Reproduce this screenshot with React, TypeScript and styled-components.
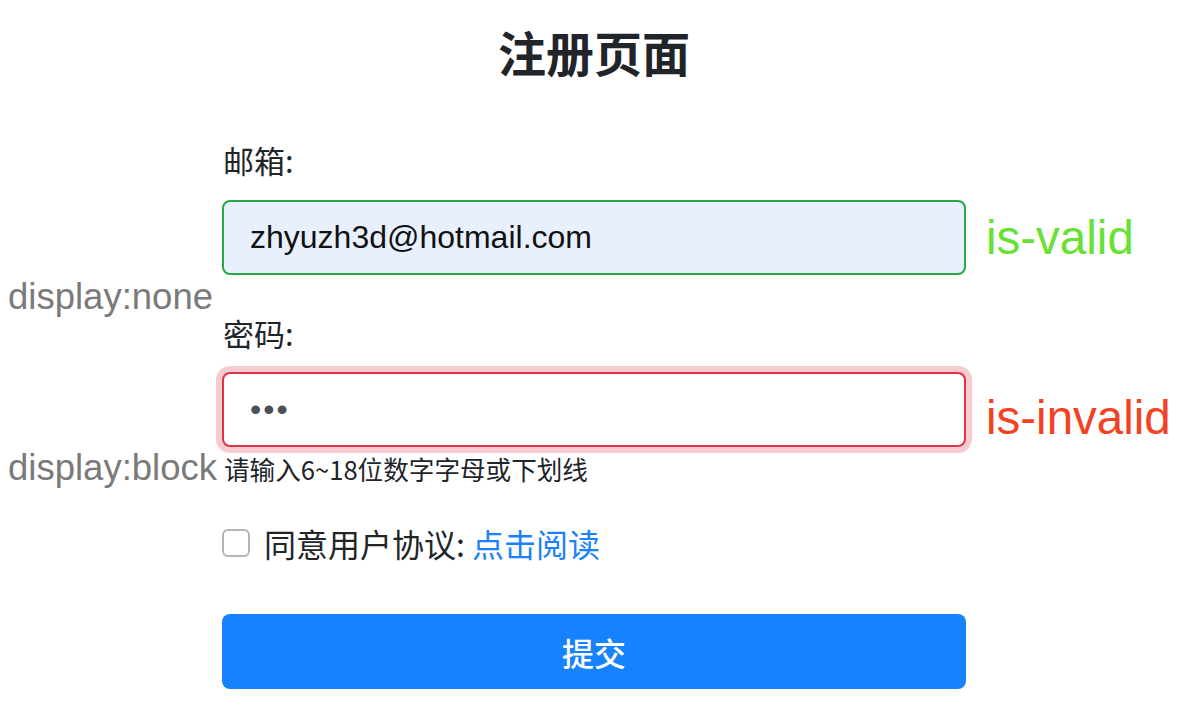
import React from "react";
import styled, { createGlobalStyle } from "styled-components";

const Global = createGlobalStyle`
  html, body { margin: 0; padding: 0; background: #fff; }
  body {
    font-family: "Liberation Sans", "Noto Sans CJK SC", sans-serif;
    color: #212529;
  }
  * { box-sizing: border-box; }
`;

const Page = styled.div`
  width: 1194px;
  height: 716px;
  overflow: hidden;
  display: flex;
  flex-direction: column;
`;

const Title = styled.h1`
  margin: 22px 0 0;
  font-size: 48px;
  line-height: 58px;
  font-weight: 700;
  text-align: center;
  padding-right: 6px;
  font-family: "Noto Sans CJK SC", sans-serif;
  color: #212529;
`;

const Form = styled.form`
  display: flex;
  flex-direction: column;
`;

const Row = styled.div<{ $mt?: number; $h?: number; $baseline?: boolean }>`
  display: grid;
  grid-template-columns: 222px 744px 1fr;
  align-items: ${(p) => (p.$baseline ? "baseline" : "center")};
  margin-top: ${(p) => p.$mt ?? 0}px;
  ${(p) => (p.$h ? `height: ${p.$h}px;` : "")}
`;

const Side = styled.div<{ $pr?: number }>`
  grid-column: 1;
  text-align: right;
  padding-right: ${(p) => p.$pr ?? 6}px;
  font-size: 36.5px;
  color: #7a7a7a;
  white-space: nowrap;
  font-family: "Liberation Sans", sans-serif;
`;

const SideNone = styled(Side)`
  align-self: stretch;
  display: flex;
  align-items: center;
  justify-content: flex-end;
  padding-top: 10px;
  line-height: 24px;
`;

const Main = styled.div`
  grid-column: 2;
`;

const Aside = styled.div<{ $color: string; $dy?: number }>`
  grid-column: 3;
  padding-left: 20px;
  padding-top: ${(p) => (p.$dy ?? 0) * 2}px;
  font-size: 47.5px;
  line-height: 56px;
  color: ${(p) => p.$color};
  font-family: "Liberation Sans", sans-serif;
  white-space: nowrap;
`;

const Label = styled.label`
  display: block;
  font-size: 31px;
  line-height: 48px;
  padding-left: 1px;
  font-family: "Noto Sans CJK SC", sans-serif;
  color: #212529;
`;

const Input = styled.input<{ $state: "valid" | "invalid" }>`
  display: block;
  width: 744px;
  height: 75px;
  padding: 0 26px;
  border-radius: 8px;
  font-size: 32px;
  font-family: "Liberation Sans", sans-serif;
  outline: none;
  border: 2px solid ${(p) => (p.$state === "valid" ? "#28a745" : "#dc3545")};
  background: ${(p) => (p.$state === "valid" ? "#e8f0fe" : "#fff")};
  color: ${(p) => (p.$state === "valid" ? "#111" : "#495057")};
  box-shadow: ${(p) =>
    p.$state === "invalid" ? "0 0 0 6px rgba(220, 53, 69, 0.25)" : "none"};
  letter-spacing: ${(p) => (p.$state === "invalid" ? "2px" : "0")};
`;

const Help = styled.small`
  display: block;
  font-size: 25.6px;
  line-height: 38px;
  padding-left: 2px;
  color: #212529;
  font-family: "Noto Sans CJK SC", sans-serif;
`;

const CheckRow = styled.div`
  display: flex;
  align-items: center;
  gap: 14px;
  font-size: 32px;
  line-height: 48px;
  font-family: "Noto Sans CJK SC", sans-serif;
`;

const Box = styled.span`
  width: 28px;
  height: 28px;
  border: 2px solid #b5b5b5;
  border-radius: 6px;
  background: #fff;
  flex: none;
`;

const Link = styled.a`
  color: #1a82fb;
  text-decoration: none;
`;

const Button = styled.button`
  display: block;
  width: 744px;
  height: 75px;
  border: none;
  border-radius: 8px;
  background: #1782fe;
  color: #fff;
  font-size: 32px;
  font-weight: 500;
  font-family: "Noto Sans CJK SC", sans-serif;
`;

export default function App() {
  return (
    <Page>
      <Global />
      <Title>注册页面</Title>
      <Form onSubmit={(e) => e.preventDefault()}>
        <Row $mt={56}>
          <Main>
            <Label>邮箱:</Label>
          </Main>
        </Row>
        <Row $mt={16}>
          <Main>
            <Input $state="valid" type="text" defaultValue="zhyuzh3d@hotmail.com" readOnly />
          </Main>
          <Aside $color="#67e133">is-valid</Aside>
        </Row>
        <Row $h={34}>
          <SideNone $pr={9}>display:none</SideNone>
        </Row>
        <Row>
          <Main>
            <Label>密码:</Label>
          </Main>
        </Row>
        <Row $mt={15}>
          <Main>
            <Input $state="invalid" type="password" defaultValue="abc" readOnly />
          </Main>
          <Aside $color="#f4411f" $dy={8}>is-invalid</Aside>
        </Row>
        <Row $baseline>
          <Side $pr={5}>display:block</Side>
          <Main>
            <Help>请输入6~18位数字字母或下划线</Help>
          </Main>
        </Row>
        <Row $mt={30}>
          <Main>
            <CheckRow>
              <Box />
              <span>
                同意用户协议: <Link href="#">点击阅读</Link>
              </span>
            </CheckRow>
          </Main>
        </Row>
        <Row $mt={47}>
          <Main>
            <Button type="button">提交</Button>
          </Main>
        </Row>
      </Form>
    </Page>
  );
}
